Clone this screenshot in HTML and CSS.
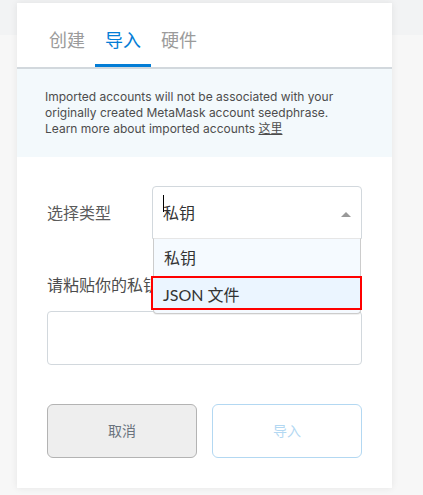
FILE: index.html
```html
<!DOCTYPE html>
<html lang="zh-CN">
<head>
<meta charset="utf-8">
<meta name="viewport" content="width=device-width, initial-scale=1">
<title>导入账户</title>
<link rel="stylesheet" href="styles.css">
</head>
<body>
<main class="card">
  <nav class="tabs">
    <button class="tab" type="button">创建</button>
    <button class="tab tab-active" type="button">导入</button>
    <button class="tab" type="button">硬件</button>
  </nav>
  <p class="notice">Imported accounts will not be associated with your<br>originally created MetaMask account seedphrase.<br>Learn more about imported accounts <a class="notice-link" href="#">这里</a></p>
  <form class="form">
    <div class="type-row">
      <label class="label" for="type">选择类型</label>
      <div class="dropdown">
        <select class="select" id="type">
          <option>私钥</option>
          <option>JSON 文件</option>
        </select>
        <span class="caret"></span>
        <svg class="arrow" viewBox="0 0 10 5" aria-hidden="true"><path d="M0 5 5 0l5 5z"/></svg>
        <ul class="menu" role="listbox">
          <li class="option" role="option">私钥</li>
          <li class="option option-focused" role="option">JSON 文件</li>
        </ul>
      </div>
    </div>
    <label class="label key-label" for="key">请粘贴你的私钥:</label>
    <input class="key-input" id="key" type="password">
    <div class="actions">
      <button class="button button-cancel" type="button">取消</button>
      <button class="button button-import" type="button" disabled>导入</button>
    </div>
  </form>
</main>
</body>
</html>
```
FILE: styles.css
```css
* {
  box-sizing: border-box;
}

body {
  margin: 0;
  padding: 3px 31px 7px 17px;
  background: linear-gradient(#f2f3f4 35px, #f7f7f7 35px);
  font-family: Lato, "Noto Sans CJK SC", sans-serif;
  color: #4d4d4d;
}

button,
input,
select {
  font-family: inherit;
}

.card {
  background: #fff;
  box-shadow: 0 0 7px rgba(0, 0, 0, 0.08);
}

.tabs {
  display: flex;
  height: 66px;
  padding: 0 22px;
  border-bottom: 2px solid #d2d8dd;
}

.tab {
  padding: 12px 10px 0;
  border: 0;
  border-bottom: 3px solid transparent;
  background: none;
  color: #9b9b9b;
  font-size: 18px;
  line-height: 24px;
}

.tab-active {
  border-bottom-color: #037dd6;
  color: #037dd6;
}

.notice {
  margin: 0;
  padding: 20px 28px;
  background: #f3f9fc;
  font-family: Inter, "Noto Sans CJK SC", sans-serif;
  font-size: 12px;
  line-height: 16px;
}

.notice-link {
  color: inherit;
}

.form {
  padding: 29px 30px 30px;
}

.type-row {
  display: flex;
  align-items: center;
  justify-content: space-between;
}

.label {
  color: #5b5b5b;
  font-size: 16px;
  line-height: 24px;
}

.dropdown {
  position: relative;
  width: 210px;
}

.select {
  display: block;
  width: 100%;
  height: 53px;
  padding: 0 10px;
  appearance: none;
  border: 1px solid #d2d8dd;
  border-radius: 4px 4px 0 0;
  outline: 0;
  background: #fff;
  color: #333;
  font-size: 16px;
}

.caret {
  position: absolute;
  top: 9px;
  left: 11px;
  width: 1px;
  height: 17px;
  background: #000;
}

.arrow {
  position: absolute;
  top: 26px;
  right: 11px;
  width: 10px;
  height: 5px;
  fill: #999;
}

.menu {
  position: absolute;
  top: 52px;
  left: 1px;
  right: 1px;
  margin: 0;
  padding: 0 0 3px;
  border: 1px solid #ccc;
  border-top-color: #e6e6e6;
  border-radius: 0 0 4px 4px;
  background: #f5faff;
  box-shadow: 0 1px 0 rgba(0, 0, 0, 0.06);
  list-style: none;
}

.option {
  height: 37px;
  padding: 0 10px;
  color: #333;
  font-size: 16px;
  line-height: 38px;
}

.option-focused {
  height: 34px;
  margin: 0 -2px 0 -3px;
  border: 2px solid #f00;
  background: #ebf5ff;
  line-height: 34px;
}

.key-label {
  display: block;
  margin-top: 34px;
  color: #4d4d4d;
}

.key-input {
  display: block;
  width: 100%;
  height: 54px;
  margin-top: 14px;
  padding: 0 15px;
  border: 1px solid #d2d8dd;
  border-radius: 4px;
  background: #fff;
  font-size: 16px;
}

.actions {
  display: flex;
  gap: 15px;
  margin-top: 39px;
}

.button {
  flex: 1;
  height: 54px;
  padding: 0 6px 2px;
  border: 1px solid;
  border-radius: 6px;
  font-size: 14px;
}

.button-cancel {
  border-color: #b3b3b3;
  background: #eee;
  color: #6a737d;
}

.button-import {
  border-color: #b3d8f2;
  background: #fff;
  color: #b3d8f2;
}
```
